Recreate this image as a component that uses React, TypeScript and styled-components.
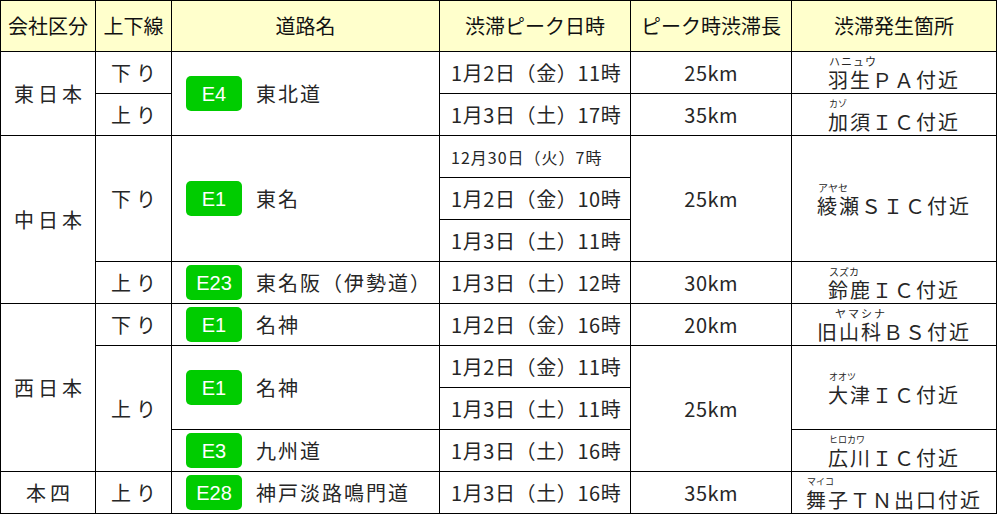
import React from 'react';
import styled, { createGlobalStyle } from 'styled-components';

const GlobalStyle = createGlobalStyle`
  html, body {
    margin: 0;
    padding: 0;
    background: #fff;
  }
  body {
    font-family: "Noto Sans CJK JP", "Noto Sans", sans-serif;
    color: #262626;
  }
`;

const Table = styled.table`
  border-collapse: collapse;
  table-layout: fixed;
  width: 997px;
  border: 1px solid #000;
`;

const HeadCell = styled.th`
  height: 50px;
  padding: 0;
  border: 1px solid #000;
  background: #ffffcc;
  color: #111;
  font-weight: normal;
  font-size: 20px;
  line-height: 24px;
  text-align: center;
  vertical-align: middle;
`;

const Cell = styled.td<{ $align?: 'left' | 'center'; $size?: number; $spacing?: number }>`
  height: 41px;
  padding: 0;
  padding-left: ${(p) => (p.$align === 'left' ? '11px' : `${p.$spacing ?? 0}px`)};
  border: 1px solid #000;
  font-size: ${(p) => p.$size ?? 20}px;
  letter-spacing: ${(p) => p.$spacing ?? 0}px;
  text-align: ${(p) => p.$align ?? 'center'};
  vertical-align: middle;
  white-space: nowrap;
  line-height: 24px;
`;

const Road = styled.div`
  display: flex;
  align-items: center;
  gap: 14px;
  padding-left: 14px;
`;

const Badge = styled.span`
  display: inline-flex;
  align-items: center;
  justify-content: center;
  width: 56px;
  height: 35px;
  border-radius: 5px;
  background: #00cc00;
  color: #fff;
  font-family: "Liberation Sans", Arial, sans-serif;
  font-size: 20px;
  letter-spacing: 0;
`;

const RoadName = styled.span`
  font-size: 20px;
  letter-spacing: 2px;
`;

const PlaceWrap = styled.div`
  display: flex;
  justify-content: center;
`;

const Place = styled.div`
  display: flex;
  flex-direction: column;
  align-items: flex-start;
  text-align: left;
`;

const Reading = styled.span<{ $size: number; $indent: number; $spacing: number }>`
  font-size: ${(p) => p.$size}px;
  letter-spacing: ${(p) => p.$spacing}px;
  padding-left: ${(p) => p.$indent}px;
  line-height: 11px;
  margin-bottom: 3px;
`;

const PlaceName = styled.span`
  font-size: 20px;
  letter-spacing: 2px;
  line-height: 20px;
`;

type Spot = { kana: string; size: number; indent?: number; spacing?: number; name: string };

const Location = ({ spot, rows }: { spot: Spot; rows?: number }) => (
  <Cell rowSpan={rows}>
    <PlaceWrap>
      <Place>
        <Reading $size={spot.size} $indent={spot.indent ?? 1} $spacing={spot.spacing ?? 0}>
          {spot.kana}
        </Reading>
        <PlaceName>{spot.name}</PlaceName>
      </Place>
    </PlaceWrap>
  </Cell>
);

const RoadCell = ({ code, name, rows }: { code: string; name: string; rows?: number }) => (
  <Cell rowSpan={rows}>
    <Road>
      <Badge>{code}</Badge>
      <RoadName>{name}</RoadName>
    </Road>
  </Cell>
);

const Date = ({ children, small }: { children: React.ReactNode; small?: boolean }) => (
  <Cell $align="left" $size={small ? 16 : 20} $spacing={small ? 1 : 0.6}>
    {children}
  </Cell>
);

const Len = ({ children, rows }: { children: React.ReactNode; rows?: number }) => (
  <Cell rowSpan={rows} $size={20} $spacing={0.5}>
    {children}
  </Cell>
);

const Company = ({ children, rows }: { children: React.ReactNode; rows?: number }) => (
  <Cell rowSpan={rows} $spacing={4}>
    {children}
  </Cell>
);

const Dir = ({ children, rows }: { children: React.ReactNode; rows?: number }) => (
  <Cell rowSpan={rows} $spacing={5}>
    {children}
  </Cell>
);

const App: React.FC = () => {
  return (
    <>
      <GlobalStyle />
      <Table>
        <colgroup>
          <col style={{ width: 95 }} />
          <col style={{ width: 76 }} />
          <col style={{ width: 268 }} />
          <col style={{ width: 191 }} />
          <col style={{ width: 161 }} />
          <col style={{ width: 205 }} />
        </colgroup>
        <thead>
          <tr>
            <HeadCell>会社区分</HeadCell>
            <HeadCell>上下線</HeadCell>
            <HeadCell>道路名</HeadCell>
            <HeadCell>渋滞ピーク日時</HeadCell>
            <HeadCell>ピーク時渋滞長</HeadCell>
            <HeadCell>渋滞発生箇所</HeadCell>
          </tr>
        </thead>
        <tbody>
          <tr>
            <Company rows={2}>東日本</Company>
            <Dir>下り</Dir>
            <RoadCell rows={2} code="E4" name="東北道" />
            <Date>1月2日（金）11時</Date>
            <Len>25km</Len>
            <Location spot={{ kana: 'ハニュウ', size: 11, spacing: 1, name: '羽生ＰＡ付近' }} />
          </tr>
          <tr>
            <Dir>上り</Dir>
            <Date>1月3日（土）17時</Date>
            <Len>35km</Len>
            <Location spot={{ kana: 'カゾ', size: 9, name: '加須ＩＣ付近' }} />
          </tr>
          <tr>
            <Company rows={4}>中日本</Company>
            <Dir rows={3}>下り</Dir>
            <RoadCell rows={3} code="E1" name="東名" />
            <Date small>12月30日（火）7時</Date>
            <Len rows={3}>25km</Len>
            <Location rows={3} spot={{ kana: 'アヤセ', size: 10, name: '綾瀬ＳＩＣ付近' }} />
          </tr>
          <tr>
            <Date>1月2日（金）10時</Date>
          </tr>
          <tr>
            <Date>1月3日（土）11時</Date>
          </tr>
          <tr>
            <Dir>上り</Dir>
            <RoadCell code="E23" name="東名阪（伊勢道）" />
            <Date>1月3日（土）12時</Date>
            <Len>30km</Len>
            <Location spot={{ kana: 'スズカ', size: 10, name: '鈴鹿ＩＣ付近' }} />
          </tr>
          <tr>
            <Company rows={4}>西日本</Company>
            <Dir>下り</Dir>
            <RoadCell code="E1" name="名神" />
            <Date>1月2日（金）16時</Date>
            <Len>20km</Len>
            <Location spot={{ kana: 'ヤマシナ', size: 11, indent: 18, spacing: 2, name: '旧山科ＢＳ付近' }} />
          </tr>
          <tr>
            <Dir rows={3}>上り</Dir>
            <RoadCell rows={2} code="E1" name="名神" />
            <Date>1月2日（金）11時</Date>
            <Len rows={3}>25km</Len>
            <Location rows={2} spot={{ kana: 'オオツ', size: 9, name: '大津ＩＣ付近' }} />
          </tr>
          <tr>
            <Date>1月3日（土）11時</Date>
          </tr>
          <tr>
            <RoadCell code="E3" name="九州道" />
            <Date>1月3日（土）16時</Date>
            <Location spot={{ kana: 'ヒロカワ', size: 9, name: '広川ＩＣ付近' }} />
          </tr>
          <tr>
            <Company>本四</Company>
            <Dir>上り</Dir>
            <RoadCell code="E28" name="神戸淡路鳴門道" />
            <Date>1月3日（土）16時</Date>
            <Len>35km</Len>
            <Location spot={{ kana: 'マイコ', size: 9, name: '舞子ＴＮ出口付近' }} />
          </tr>
        </tbody>
      </Table>
    </>
  );
};

export default App;
